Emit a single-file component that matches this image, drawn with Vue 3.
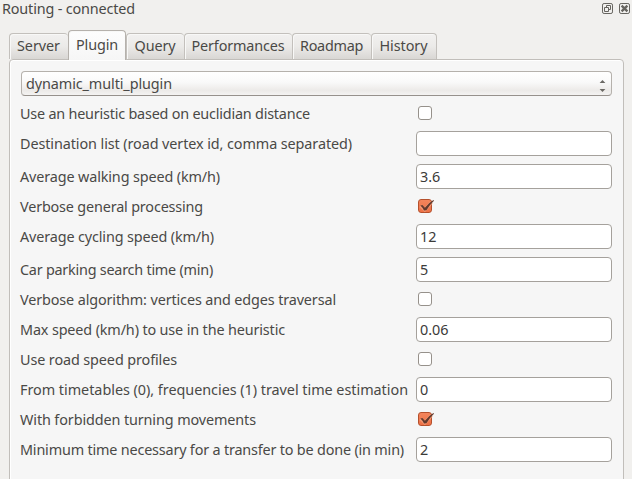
<script setup>
import { ref } from 'vue'

const tabs = [
  { name: 'Server', width: 59, text: 43 },
  { name: 'Plugin', width: 58, text: 42 },
  { name: 'Query', width: 58, text: 41 },
  { name: 'Performances', width: 108, text: 93 },
  { name: 'Roadmap', width: 79, text: 63 },
  { name: 'History', width: 66, text: 48 }
]
const active = ref('Plugin')

const rows = ref([
  { label: 'Use an heuristic based on euclidian distance', text: 290, type: 'check', value: false },
  { label: 'Destination list (road vertex id, comma separated)', text: 332, type: 'text', value: '' },
  { label: 'Average walking speed (km/h)', text: 200, type: 'text', value: '3.6' },
  { label: 'Verbose general processing', text: 183, type: 'check', value: true },
  { label: 'Average cycling speed (km/h)', text: 194, type: 'text', value: '12' },
  { label: 'Car parking search time (min)', text: 193, type: 'text', value: '5' },
  { label: 'Verbose algorithm: vertices and edges traversal', text: 316, type: 'check', value: false },
  { label: 'Max speed (km/h) to use in the heuristic', text: 265, type: 'text', value: '0.06' },
  { label: 'Use road speed profiles', text: 157, type: 'check', value: false },
  { label: 'From timetables (0), frequencies (1) travel time estimation', text: 388, type: 'text', value: '0' },
  { label: 'With forbidden turning movements', text: 236, type: 'check', value: true },
  { label: 'Minimum time necessary for a transfer to be done (in min)', text: 384, type: 'text', value: '2' }
])

// Tracks each label so that it occupies its nominal width.
const vFit = {
  mounted(el, { value }) {
    const natural = el.getBoundingClientRect().width
    el.style.letterSpacing = (value - natural) / el.textContent.length + 'px'
  }
}
</script>

<template>
  <div class="dock">
    <header class="title">
      <span v-fit="133" class="txt">Routing - connected</span>
      <div class="buttons">
        <svg width="12" height="12" viewBox="0 0 12 12" fill="none" stroke="#66645f">
          <rect x=".5" y=".5" width="10" height="10" rx="1.6" />
          <path d="M4.500 4.500V2.500H8.500V6.500H6.500M2.500 4.500H6.500V8.500H2.500Z" />
        </svg>
        <svg width="12" height="12" viewBox="0 0 12 12" fill="none" stroke="#66645f">
          <rect x=".5" y=".5" width="10" height="10" rx="1.6" />
          <path d="M2.600 2.600L8.400 8.400M8.400 2.600L2.600 8.400" stroke-width="2.300" />
        </svg>
      </div>
    </header>

    <nav class="tabs">
      <div
        v-for="t in tabs"
        :key="t.name"
        class="tab"
        :class="{ active: t.name === active }"
        :style="{ width: t.width + 'px' }"
        @click="active = t.name"
      >
        <span v-fit="t.text" class="txt">{{ t.name }}</span>
      </div>
    </nav>

    <main class="panel">
      <div class="combo">
        <span v-fit="146" class="txt">dynamic_multi_plugin</span>
        <svg width="7" height="14" viewBox="0 0 7 14" fill="#6b6965">
          <path d="M.6 3.900L3.500 .9 6.400 3.900zM.6 10h5.800L3.500 13z" />
        </svg>
      </div>

      <div v-for="r in rows" :key="r.label" class="row" :class="r.type">
        <div class="label"><span v-fit="r.text" class="txt">{{ r.label }}</span></div>
        <input v-if="r.type === 'text'" v-model="r.value" class="field" type="text" />
        <div v-else class="box" :class="{ on: r.value }" @click="r.value = !r.value">
          <svg v-if="r.value" class="mark" width="17" height="16" viewBox="0 0 17 16" fill="none">
            <path d="M2.600 6.800L6.800 10.800L13.600 3.400" stroke="#f9ab8a" stroke-width="3.600" opacity=".6" />
            <path d="M2.400 6.600L4.400 5.900L6.900 8.700Q10.300 4.100 15.400 1L16 1.700Q11.500 5.800 8.400 11.300L6 11.500Q4.500 8.500 2.400 6.600Z" fill="#633a2d" />
          </svg>
        </div>
      </div>
    </main>
  </div>
</template>

<style>
body {
  margin: 0;
  background: #f1f0ee;
  overflow: hidden;
}
</style>

<style scoped>
.dock {
  box-sizing: border-box;
  width: 632px;
  height: 479px;
  overflow: hidden;
  display: flex;
  flex-direction: column;
  background: #f1f0ee;
  color: #4a4946;
  font: 14.4px/19px "Noto Sans", sans-serif;
}
.txt {
  white-space: pre;
}
.title {
  height: 30px;
  padding: 0 1px 0 2px;
  display: flex;
  justify-content: space-between;
  align-items: flex-start;
  line-height: 17px;
}
.buttons {
  display: flex;
  gap: 5px;
  padding-top: 3px;
}
.tabs {
  display: flex;
  align-items: flex-end;
  height: 29px;
  padding-left: 9px;
}
.tab {
  box-sizing: border-box;
  height: 26px;
  display: flex;
  justify-content: center;
  padding-top: 2px;
  padding-right: 1px;
  border: 1px solid #c3c0bc;
  border-right-width: 0;
  border-bottom: 0;
  border-radius: 4px 4px 0 0;
  background: linear-gradient(#f2f1f0, #ebeae8 50%, #d9d7d4);
  box-shadow: inset 1px 1px #f8f8f7;
}
.tab:last-child {
  border-right-width: 1px;
}
.tab.active {
  position: relative;
  height: 30px;
  margin-bottom: -1px;
  padding-top: 4px;
  padding-right: 0;
  border-right-width: 1px;
  border-color: #b5b1ac;
  background: linear-gradient(#fdfdfd, #f6f6f6);
}
.panel {
  box-sizing: border-box;
  flex: 1;
  margin: 0 8px -4px 9px;
  padding: 11px 11px 0;
  border: 1px solid #c1beba;
  border-radius: 4px 4px 0 0;
  background: #f6f6f6;
  box-shadow: inset 1px 1px #fff;
  display: flex;
  flex-direction: column;
  gap: 8px;
}
.combo {
  box-sizing: border-box;
  flex: none;
  height: 25px;
  display: flex;
  align-items: center;
  justify-content: space-between;
  padding: 0 5px 0 4px;
  border: 1px solid #b5b1ac;
  border-bottom-color: #96918c;
  border-radius: 4px;
  background: linear-gradient(#fff, #f9f9f9 45%, #eceae8 80%, #f4f3f2);
}
.combo svg {
  margin-top: 4px;
}
.row {
  flex: none;
  display: grid;
  grid-template-columns: 395px 196px;
  align-items: center;
  height: 25px;
}
.row.check {
  height: 19px;
}
.label {
  margin-left: -1px;
}
.field {
  box-sizing: border-box;
  width: 196px;
  height: 25px;
  padding: 0 3px;
  border: 1px solid #a5a19c;
  border-radius: 4px;
  background: #fff;
  color: #3c3b39;
  font: inherit;
  outline: none;
}
.box {
  position: relative;
  box-sizing: border-box;
  width: 14px;
  height: 14px;
  margin: 0 0 1px 2px;
  border: 1px solid #96918b;
  border-radius: 3px;
  background: #fff;
}
.box.on {
  border-color: #b5502c;
  background: linear-gradient(#f3855c, #ee7146);
}
.mark {
  position: absolute;
  left: -1px;
  top: -1px;
}
</style>
